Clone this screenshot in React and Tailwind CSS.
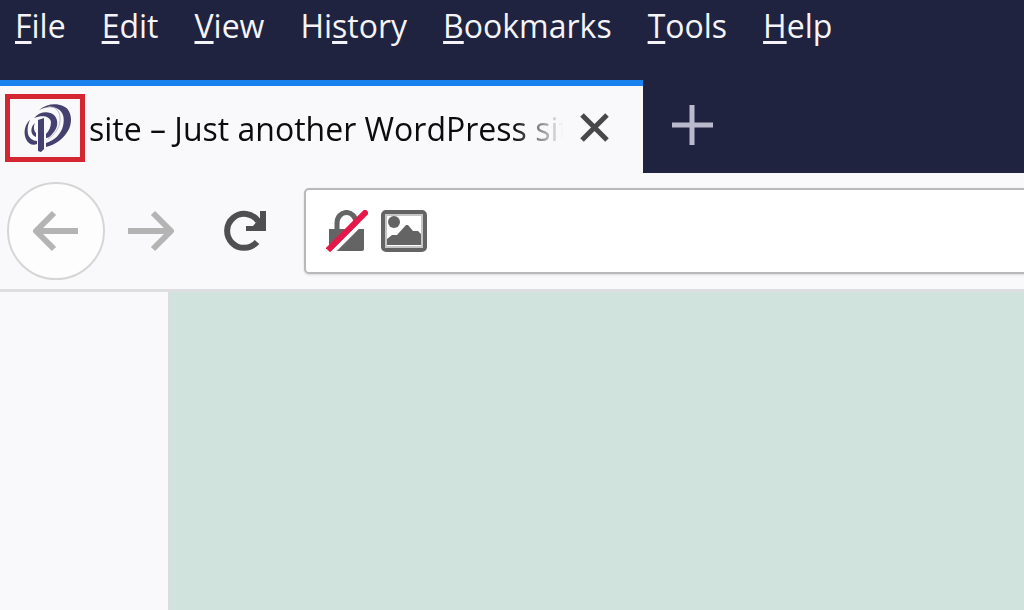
const menus = [
  { before: "", key: "F", after: "ile" },
  { before: "", key: "E", after: "dit" },
  { before: "", key: "V", after: "iew" },
  { before: "Hi", key: "s", after: "tory" },
  { before: "", key: "B", after: "ookmarks" },
  { before: "", key: "T", after: "ools" },
  { before: "", key: "H", after: "elp" },
];

function SiteLogo() {
  return (
    <svg viewBox="0 0 47 48" className="h-12 w-[47px]" fill="#444070" aria-hidden="true">
      <path d="M15 6C22 0 32-1 39 2C47 5 49 16 45 25C40 35 31 41 22 43L22 39C31 36 37 30 39 22C41 13 39 7 32 4C27 2 21 3 15 6Z" />
      <path d="M10 14C16 7 25 7 30 11C35 16 34 24 29 29C27 32 24 34 22 34L22 30C25 27 27 23 27 18C26 12 18 11 10 14Z" />
      <path d="M6 16C1 20-1 29 2 35C4 40 9 42 13 40L13 37C9 37 5 34 4 30C3 25 4 20 6 16Z" />
      <path d="M11 19C6 23 6 31 12 33L12 29C10 27 9 23 11 19Z" />
      <path d="M14 16L20 14V45L17 48L14 47Z" />
      <path d="M24 3C32 2 37 8 36 17C35 25 30 31 24 35" fill="none" stroke="#bab8ca" strokeWidth="1" />
    </svg>
  );
}

function BackIcon() {
  return (
    <svg viewBox="0 0 48 42" className="h-[42px] w-12" fill="none" stroke="#b4b4b5" strokeWidth="6" strokeLinejoin="round" aria-hidden="true">
      <path d="M46 21H5M22 3L4 21L22 39" />
    </svg>
  );
}

function ForwardIcon() {
  return (
    <svg viewBox="0 0 48 42" className="h-[42px] w-12" fill="none" stroke="#b4b4b5" strokeWidth="6" strokeLinejoin="round" aria-hidden="true">
      <path d="M1 21H43M26 3L44 21L26 39" />
    </svg>
  );
}

function ReloadIcon() {
  return (
    <svg viewBox="0 0 46 42" className="h-[42px] w-[46px]" aria-hidden="true">
      <path d="M35 32A17 17 0 1 1 36 11" fill="none" stroke="#4f4f51" strokeWidth="6" />
      <path d="M38 1H44V21H24V16H31L38 8Z" fill="#4f4f51" />
    </svg>
  );
}

function InsecureIcon() {
  return (
    <svg viewBox="0 0 42 42" className="h-[42px] w-[42px]" aria-hidden="true">
      <path d="M11 20V13A9 10 0 0 1 30 13V20" fill="none" stroke="#646465" strokeWidth="5" />
      <path d="M3 19H38V39Q38 41 36 41H6Q3 41 3 39Z" fill="#646465" />
      <path d="M6 43L42 7" stroke="#fff" strokeWidth="4" />
      <path d="M4 38L39 3" stroke="#e5184a" strokeWidth="6" strokeLinecap="square" />
    </svg>
  );
}

function ImageIcon() {
  return (
    <svg viewBox="0 0 46 42" className="h-[42px] w-[46px]" aria-hidden="true">
      <rect x="2" y="2" width="42" height="38" rx="3" fill="#fff" stroke="#646465" strokeWidth="4" />
      <rect x="5" y="5" width="36" height="32" fill="none" stroke="#c6c6c6" strokeWidth="2" />
      <circle cx="13" cy="12" r="6" fill="#646465" />
      <path d="M6 35V29L11 25H16L25 15H27L32 21H37L40 24V35Z" fill="#646465" />
    </svg>
  );
}

export default function App() {
  return (
    <div className="flex min-h-screen flex-col overflow-hidden bg-[#f9f9fb] font-['Open_Sans','Noto_Sans',sans-serif]">
      <header className="bg-[#20233f]">
        <nav className="flex h-20 items-start gap-9 pt-1 pl-[15px]">
          {menus.map((m) => (
            <button key={m.key + m.after} type="button" className="text-[32px] leading-[44px] text-[#f4f4f8]">
              {m.before}
              <span className="underline decoration-3 underline-offset-3 [text-decoration-skip-ink:none]">{m.key}</span>
              {m.after}
            </button>
          ))}
        </nav>

        <div className="flex h-[93px]">
          <div className="flex w-[643px] shrink-0 items-start border-t-6 border-[#1a82ee] bg-[#f9f9fb]">
            <div className="mt-2 ml-[5px] flex h-[68px] w-20 shrink-0 items-center justify-center border-5 border-[#d42630] pl-1">
              <SiteLogo />
            </div>
            <div className="mt-5 ml-1 w-[476px] overflow-hidden text-[32px] leading-[46px] whitespace-nowrap text-[#0c0c0d] [mask-image:linear-gradient(to_right,#000_425px,transparent_474px)]">
              site – Just another WordPress site
            </div>
            <button type="button" aria-label="Close tab" className="mt-[26px] ml-[14px]">
              <svg viewBox="0 0 30 30" className="h-[30px] w-[30px]" fill="none" stroke="#48484a" strokeWidth="5">
                <path d="M3 3L28 28M28 3L3 28" />
              </svg>
            </button>
          </div>
          <button type="button" aria-label="New tab" className="ml-7 flex h-[90px] items-center">
            <svg viewBox="0 0 42 42" className="h-[42px] w-[42px]" fill="none" stroke="#babace" strokeWidth="5">
              <path d="M1 21H42M21 1V41" />
            </svg>
          </button>
        </div>
      </header>

      <div className="flex h-[119px] shrink-0 items-center border-b-3 border-[#dedee0] pl-[7px]">
        <button type="button" aria-label="Back" className="flex size-[98px] shrink-0 items-center justify-center rounded-full border-2 border-[#d6d6d7] bg-[#fdfdfe]">
          <BackIcon />
        </button>
        <button type="button" aria-label="Forward" className="ml-[22px] shrink-0">
          <ForwardIcon />
        </button>
        <button type="button" aria-label="Reload" className="ml-[47px] shrink-0">
          <ReloadIcon />
        </button>
        <div className="-mr-2 ml-9 flex h-[86px] grow items-center rounded-[5px] border-2 border-[#b9b9bb] bg-white pl-5 shadow-sm">
          <InsecureIcon />
          <span className="ml-[13px]">
            <ImageIcon />
          </span>
          <input type="text" aria-label="Address" className="ml-4 h-full min-w-0 grow bg-transparent text-[32px] outline-none" />
        </div>
      </div>

      <main className="flex grow">
        <aside className="w-[168px] shrink-0 bg-[#f9f9fb]" />
        <section className="grow border-l-3 border-[#d6dfdd] bg-[#d0e4dd]" />
      </main>
    </div>
  );
}
